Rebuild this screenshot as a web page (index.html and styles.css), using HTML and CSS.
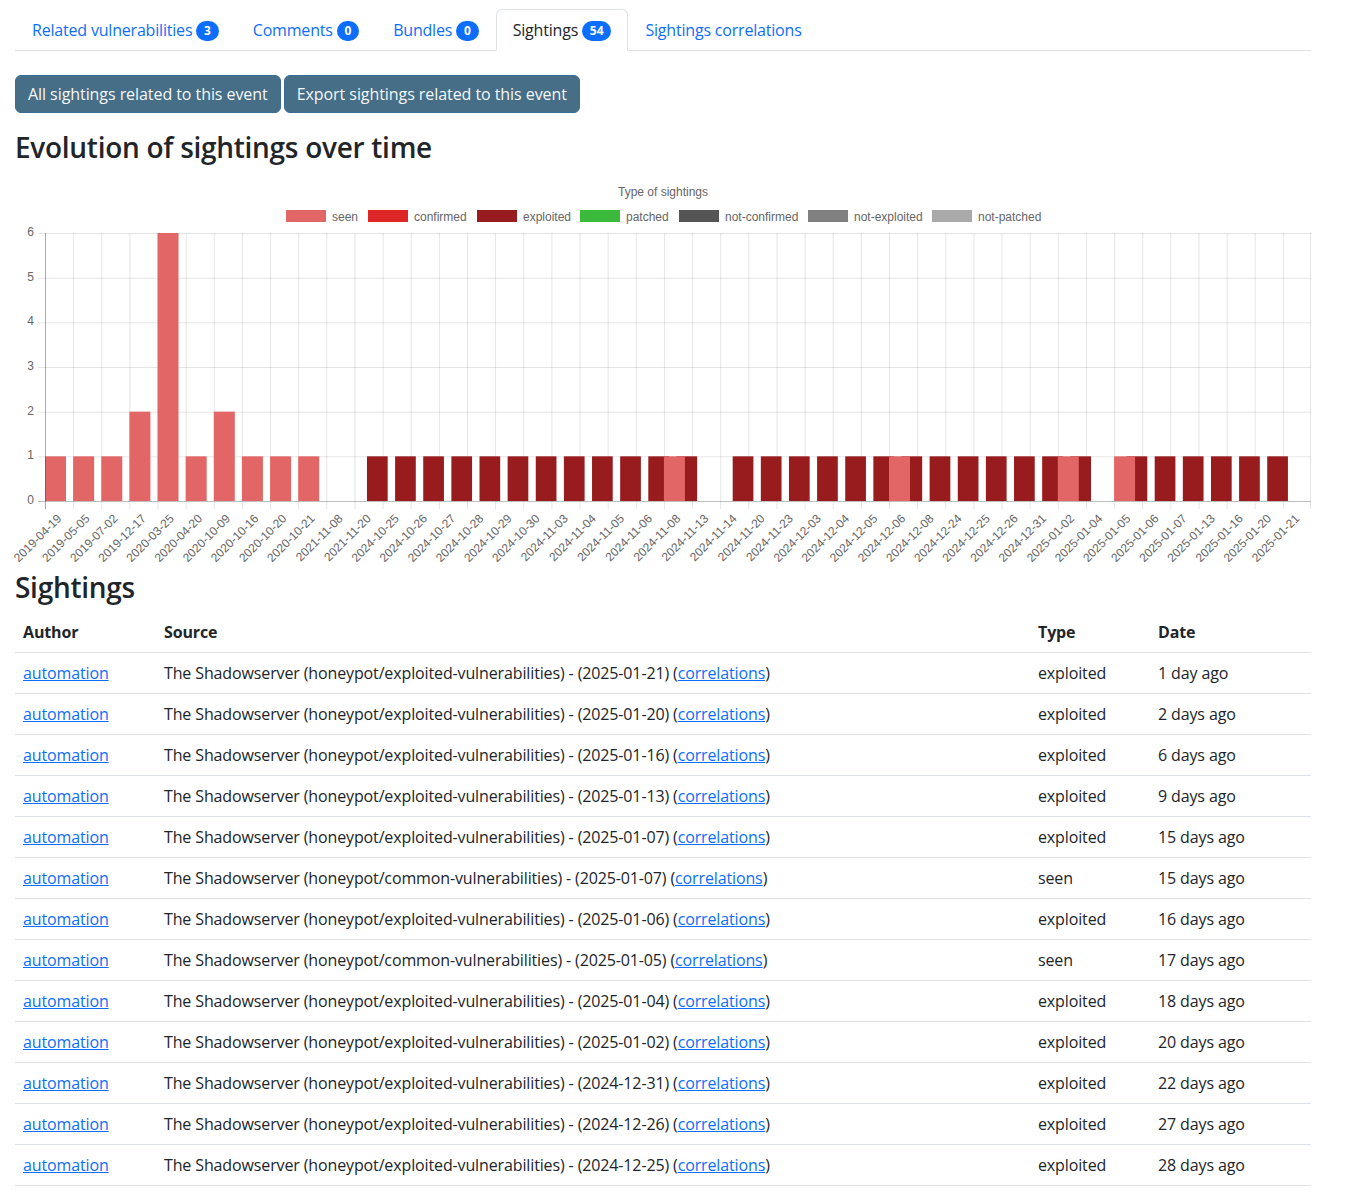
FILE: index.html
```html
<!DOCTYPE html>
<html lang="en">
<head>
<meta charset="utf-8">
<title>Sightings</title>
<link rel="stylesheet" href="styles.css">
</head>
<body>
<div class="page">
  <ul class="tabs">
    <li><a class="tab" href="#">Related vulnerabilities <span class="badge">3</span></a></li>
    <li><a class="tab" href="#">Comments <span class="badge">0</span></a></li>
    <li><a class="tab" href="#">Bundles <span class="badge">0</span></a></li>
    <li><a class="tab active" href="#">Sightings <span class="badge">54</span></a></li>
    <li><a class="tab" href="#">Sightings correlations</a></li>
  </ul>

  <div class="actions">
    <a class="btn" href="#">All sightings related to this event</a>
    <a class="btn" href="#">Export sightings related to this event</a>
  </div>

  <h3 class="heading heading-chart">Evolution of sightings over time</h3>

  <svg class="chart" width="1296" height="400" viewBox="15 171 1296 400" xmlns="http://www.w3.org/2000/svg">
    <text class="chart-title" x="663" y="193">Type of sightings</text>
    <g class="legend">
      <rect x="286" y="210" width="40" height="12" fill="#e36666"/><text x="332" y="217.5">seen</text>
      <rect x="368" y="210" width="40" height="12" fill="#dc2628"/><text x="414" y="217.5">confirmed</text>
      <rect x="477" y="210" width="40" height="12" fill="#981b1e"/><text x="523" y="217.5">exploited</text>
      <rect x="580" y="210" width="40" height="12" fill="#3cba3c"/><text x="626" y="217.5">patched</text>
      <rect x="679" y="210" width="40" height="12" fill="#555555"/><text x="725" y="217.5">not-confirmed</text>
      <rect x="808" y="210" width="40" height="12" fill="#808080"/><text x="854" y="217.5">not-exploited</text>
      <rect x="932" y="210" width="40" height="12" fill="#aaaaaa"/><text x="978" y="217.5">not-patched</text>
    </g>
    <path class="grid" d="M38 233.5H1311 M38 278.2H1311 M38 322.8H1311 M38 367.5H1311 M38 412.2H1311 M38 456.8H1311
      M45.5 233V509 M73.6 233V509 M101.8 233V509 M129.9 233V509 M158 233V509 M186.2 233V509 M214.3 233V509 M242.4 233V509 M270.6 233V509 M298.7 233V509
      M326.8 233V509 M355 233V509 M383.1 233V509 M411.2 233V509 M439.4 233V509 M467.5 233V509 M495.6 233V509 M523.8 233V509 M551.9 233V509 M580 233V509
      M608.2 233V509 M636.3 233V509 M664.4 233V509 M692.6 233V509 M720.7 233V509 M748.8 233V509 M777 233V509 M805.1 233V509 M833.2 233V509 M861.4 233V509
      M889.5 233V509 M917.6 233V509 M945.8 233V509 M973.9 233V509 M1002 233V509 M1030.2 233V509 M1058.3 233V509 M1086.4 233V509 M1114.6 233V509 M1142.7 233V509
      M1170.8 233V509 M1199 233V509 M1227.1 233V509 M1255.2 233V509 M1283.4 233V509 M1310.5 233V509"/>
    <g class="yticks">
      <text x="34" y="501">0</text>
      <text x="34" y="456.3">1</text>
      <text x="34" y="411.7">2</text>
      <text x="34" y="367">3</text>
      <text x="34" y="322.3">4</text>
      <text x="34" y="277.7">5</text>
      <text x="34" y="233">6</text>
    </g>
    <g fill="#981b1e">
      <rect x="366.97" y="456.33" width="20.7" height="44.67"/>
      <rect x="395.1" y="456.33" width="20.7" height="44.67"/>
      <rect x="423.23" y="456.33" width="20.7" height="44.67"/>
      <rect x="451.37" y="456.33" width="20.7" height="44.67"/>
      <rect x="479.5" y="456.33" width="20.7" height="44.67"/>
      <rect x="507.63" y="456.33" width="20.7" height="44.67"/>
      <rect x="535.77" y="456.33" width="20.7" height="44.67"/>
      <rect x="563.9" y="456.33" width="20.7" height="44.67"/>
      <rect x="592.03" y="456.33" width="20.7" height="44.67"/>
      <rect x="620.17" y="456.33" width="20.7" height="44.67"/>
      <rect x="648.3" y="456.33" width="20.7" height="44.67"/>
      <rect x="676.43" y="456.33" width="20.7" height="44.67"/>
      <rect x="732.7" y="456.33" width="20.7" height="44.67"/>
      <rect x="760.83" y="456.33" width="20.7" height="44.67"/>
      <rect x="788.97" y="456.33" width="20.7" height="44.67"/>
      <rect x="817.1" y="456.33" width="20.7" height="44.67"/>
      <rect x="845.23" y="456.33" width="20.7" height="44.67"/>
      <rect x="873.37" y="456.33" width="20.7" height="44.67"/>
      <rect x="901.5" y="456.33" width="20.7" height="44.67"/>
      <rect x="929.63" y="456.33" width="20.7" height="44.67"/>
      <rect x="957.77" y="456.33" width="20.7" height="44.67"/>
      <rect x="985.9" y="456.33" width="20.7" height="44.67"/>
      <rect x="1014.03" y="456.33" width="20.7" height="44.67"/>
      <rect x="1042.17" y="456.33" width="20.7" height="44.67"/>
      <rect x="1070.3" y="456.33" width="20.7" height="44.67"/>
      <rect x="1126.57" y="456.33" width="20.7" height="44.67"/>
      <rect x="1154.7" y="456.33" width="20.7" height="44.67"/>
      <rect x="1182.83" y="456.33" width="20.7" height="44.67"/>
      <rect x="1210.97" y="456.33" width="20.7" height="44.67"/>
      <rect x="1239.1" y="456.33" width="20.7" height="44.67"/>
      <rect x="1267.23" y="456.33" width="20.7" height="44.67"/>
    </g>
    <g fill="#e36666">
      <rect x="45" y="456.33" width="21" height="44.67"/>
      <rect x="73.13" y="456.33" width="21" height="44.67"/>
      <rect x="101.27" y="456.33" width="21" height="44.67"/>
      <rect x="129.4" y="411.67" width="21" height="89.33"/>
      <rect x="157.53" y="233" width="21" height="268"/>
      <rect x="185.67" y="456.33" width="21" height="44.67"/>
      <rect x="213.8" y="411.67" width="21" height="89.33"/>
      <rect x="241.93" y="456.33" width="21" height="44.67"/>
      <rect x="270.07" y="456.33" width="21" height="44.67"/>
      <rect x="298.2" y="456.33" width="21" height="44.67"/>
      <rect x="663.93" y="456.33" width="21" height="44.67"/>
      <rect x="889" y="456.33" width="21" height="44.67"/>
      <rect x="1057.8" y="456.33" width="21" height="44.67"/>
      <rect x="1114.07" y="456.33" width="21" height="44.67"/>
    </g>
    <path class="axis" d="M38 501.5H1311 M45.5 233V509"/>
    <g class="xticks">
      <text transform="translate(60 517) rotate(-45)">2019-04-19</text>
      <text transform="translate(88.13 517) rotate(-45)">2019-05-05</text>
      <text transform="translate(116.27 517) rotate(-45)">2019-07-02</text>
      <text transform="translate(144.4 517) rotate(-45)">2019-12-17</text>
      <text transform="translate(172.53 517) rotate(-45)">2020-03-25</text>
      <text transform="translate(200.67 517) rotate(-45)">2020-04-20</text>
      <text transform="translate(228.8 517) rotate(-45)">2020-10-09</text>
      <text transform="translate(256.93 517) rotate(-45)">2020-10-16</text>
      <text transform="translate(285.07 517) rotate(-45)">2020-10-20</text>
      <text transform="translate(313.2 517) rotate(-45)">2020-10-21</text>
      <text transform="translate(341.33 517) rotate(-45)">2021-11-08</text>
      <text transform="translate(369.47 517) rotate(-45)">2021-11-20</text>
      <text transform="translate(397.6 517) rotate(-45)">2024-10-25</text>
      <text transform="translate(425.73 517) rotate(-45)">2024-10-26</text>
      <text transform="translate(453.87 517) rotate(-45)">2024-10-27</text>
      <text transform="translate(482 517) rotate(-45)">2024-10-28</text>
      <text transform="translate(510.13 517) rotate(-45)">2024-10-29</text>
      <text transform="translate(538.27 517) rotate(-45)">2024-10-30</text>
      <text transform="translate(566.4 517) rotate(-45)">2024-11-03</text>
      <text transform="translate(594.53 517) rotate(-45)">2024-11-04</text>
      <text transform="translate(622.67 517) rotate(-45)">2024-11-05</text>
      <text transform="translate(650.8 517) rotate(-45)">2024-11-06</text>
      <text transform="translate(678.93 517) rotate(-45)">2024-11-08</text>
      <text transform="translate(707.07 517) rotate(-45)">2024-11-13</text>
      <text transform="translate(735.2 517) rotate(-45)">2024-11-14</text>
      <text transform="translate(763.33 517) rotate(-45)">2024-11-20</text>
      <text transform="translate(791.47 517) rotate(-45)">2024-11-23</text>
      <text transform="translate(819.6 517) rotate(-45)">2024-12-03</text>
      <text transform="translate(847.73 517) rotate(-45)">2024-12-04</text>
      <text transform="translate(875.87 517) rotate(-45)">2024-12-05</text>
      <text transform="translate(904 517) rotate(-45)">2024-12-06</text>
      <text transform="translate(932.13 517) rotate(-45)">2024-12-08</text>
      <text transform="translate(960.27 517) rotate(-45)">2024-12-24</text>
      <text transform="translate(988.4 517) rotate(-45)">2024-12-25</text>
      <text transform="translate(1016.53 517) rotate(-45)">2024-12-26</text>
      <text transform="translate(1044.67 517) rotate(-45)">2024-12-31</text>
      <text transform="translate(1072.8 517) rotate(-45)">2025-01-02</text>
      <text transform="translate(1100.93 517) rotate(-45)">2025-01-04</text>
      <text transform="translate(1129.07 517) rotate(-45)">2025-01-05</text>
      <text transform="translate(1157.2 517) rotate(-45)">2025-01-06</text>
      <text transform="translate(1185.33 517) rotate(-45)">2025-01-07</text>
      <text transform="translate(1213.47 517) rotate(-45)">2025-01-13</text>
      <text transform="translate(1241.6 517) rotate(-45)">2025-01-16</text>
      <text transform="translate(1269.73 517) rotate(-45)">2025-01-20</text>
      <text transform="translate(1297.87 517) rotate(-45)">2025-01-21</text>
    </g>
  </svg>

  <h3 class="heading heading-table">Sightings</h3>

  <table class="table">
    <thead>
      <tr>
        <th class="col-author">Author</th>
        <th class="col-source">Source</th>
        <th class="col-type">Type</th>
        <th class="col-date">Date</th>
      </tr>
    </thead>
    <tbody>
      <tr><td><a href="#">automation</a></td><td>The Shadowserver (honeypot/exploited-vulnerabilities) - (2025-01-21) (<a href="#">correlations</a>)</td><td>exploited</td><td>1 day ago</td></tr>
      <tr><td><a href="#">automation</a></td><td>The Shadowserver (honeypot/exploited-vulnerabilities) - (2025-01-20) (<a href="#">correlations</a>)</td><td>exploited</td><td>2 days ago</td></tr>
      <tr><td><a href="#">automation</a></td><td>The Shadowserver (honeypot/exploited-vulnerabilities) - (2025-01-16) (<a href="#">correlations</a>)</td><td>exploited</td><td>6 days ago</td></tr>
      <tr><td><a href="#">automation</a></td><td>The Shadowserver (honeypot/exploited-vulnerabilities) - (2025-01-13) (<a href="#">correlations</a>)</td><td>exploited</td><td>9 days ago</td></tr>
      <tr><td><a href="#">automation</a></td><td>The Shadowserver (honeypot/exploited-vulnerabilities) - (2025-01-07) (<a href="#">correlations</a>)</td><td>exploited</td><td>15 days ago</td></tr>
      <tr><td><a href="#">automation</a></td><td>The Shadowserver (honeypot/common-vulnerabilities) - (2025-01-07) (<a href="#">correlations</a>)</td><td>seen</td><td>15 days ago</td></tr>
      <tr><td><a href="#">automation</a></td><td>The Shadowserver (honeypot/exploited-vulnerabilities) - (2025-01-06) (<a href="#">correlations</a>)</td><td>exploited</td><td>16 days ago</td></tr>
      <tr><td><a href="#">automation</a></td><td>The Shadowserver (honeypot/common-vulnerabilities) - (2025-01-05) (<a href="#">correlations</a>)</td><td>seen</td><td>17 days ago</td></tr>
      <tr><td><a href="#">automation</a></td><td>The Shadowserver (honeypot/exploited-vulnerabilities) - (2025-01-04) (<a href="#">correlations</a>)</td><td>exploited</td><td>18 days ago</td></tr>
      <tr><td><a href="#">automation</a></td><td>The Shadowserver (honeypot/exploited-vulnerabilities) - (2025-01-02) (<a href="#">correlations</a>)</td><td>exploited</td><td>20 days ago</td></tr>
      <tr><td><a href="#">automation</a></td><td>The Shadowserver (honeypot/exploited-vulnerabilities) - (2024-12-31) (<a href="#">correlations</a>)</td><td>exploited</td><td>22 days ago</td></tr>
      <tr><td><a href="#">automation</a></td><td>The Shadowserver (honeypot/exploited-vulnerabilities) - (2024-12-26) (<a href="#">correlations</a>)</td><td>exploited</td><td>27 days ago</td></tr>
      <tr><td><a href="#">automation</a></td><td>The Shadowserver (honeypot/exploited-vulnerabilities) - (2024-12-25) (<a href="#">correlations</a>)</td><td>exploited</td><td>28 days ago</td></tr>
    </tbody>
  </table>
</div>
</body>
</html>
```

FILE: styles.css
```css
* { box-sizing: border-box; }

body {
  margin: 0;
  background: #fff;
  color: #212529;
  font-family: "Open Sans", "Noto Sans", sans-serif;
  font-size: 16px;
  line-height: 1.5;
  letter-spacing: -0.008em;
}

a { color: #0d6efd; }

.page {
  width: 1311px;
  padding: 9px 0 0 15px;
}

/* tabs */
.tabs {
  display: flex;
  list-style: none;
  margin: 0;
  padding: 0;
  border-bottom: 1px solid #dee2e6;
}

.tab {
  display: block;
  padding: 8px 16px;
  margin-bottom: -1px;
  border: 1px solid transparent;
  border-top-left-radius: 6px;
  border-top-right-radius: 6px;
  color: #0d6efd;
  text-decoration: none;
  letter-spacing: -0.012em;
}

.tab.active {
  color: #212529;
  background: #fff;
  border-color: #dee2e6 #dee2e6 #fff;
}

.badge {
  display: inline-block;
  padding: 4px 7.8px;
  font-size: 12px;
  font-weight: 700;
  line-height: 1;
  letter-spacing: 0;
  color: #fff;
  background: #0d6efd;
  border-radius: 50rem;
  vertical-align: 1px;
}

/* action buttons */
.actions {
  display: flex;
  gap: 3px;
  margin-top: 24px;
}

.btn {
  display: inline-block;
  padding: 6px 12px;
  color: #f4f6f8;
  background: #466e86;
  border: 1px solid #3b6c98;
  border-radius: 6px;
  text-decoration: none;
  letter-spacing: -0.004em;
}

/* headings */
.heading {
  margin: 0 0 8px;
  font-size: 28px;
  font-weight: 600;
  line-height: 1.2;
  letter-spacing: -0.01em;
  color: #212529;
}

.heading-chart { margin: 18px 0 6px; }

.heading-table { margin-top: 0; }

/* chart */
.chart {
  display: block;
  overflow: visible;
  font-family: "Liberation Sans", Arial, sans-serif;
  font-size: 12px;
  letter-spacing: 0;
}

.chart text { fill: #666; }

.chart-title { text-anchor: middle; dominant-baseline: middle; }

.legend text { dominant-baseline: middle; }

.grid {
  fill: none;
  stroke: rgba(0, 0, 0, 0.1);
  stroke-width: 1;
}

.axis {
  fill: none;
  stroke: rgba(0, 0, 0, 0.25);
  stroke-width: 1;
}

.yticks text { text-anchor: end; dominant-baseline: middle; }

.xticks text { text-anchor: end; dominant-baseline: middle; }

/* table */
.table {
  width: 1296px;
  border-collapse: collapse;
  table-layout: fixed;
}

.table th,
.table td {
  padding: 8px;
  text-align: left;
  border-bottom: 1px solid #dee2e6;
  white-space: nowrap;
}

.table th { font-weight: 700; }

.col-author { width: 141px; }
.col-source { width: 874px; }
.col-type { width: 120px; }
.col-date { width: 161px; }
```
